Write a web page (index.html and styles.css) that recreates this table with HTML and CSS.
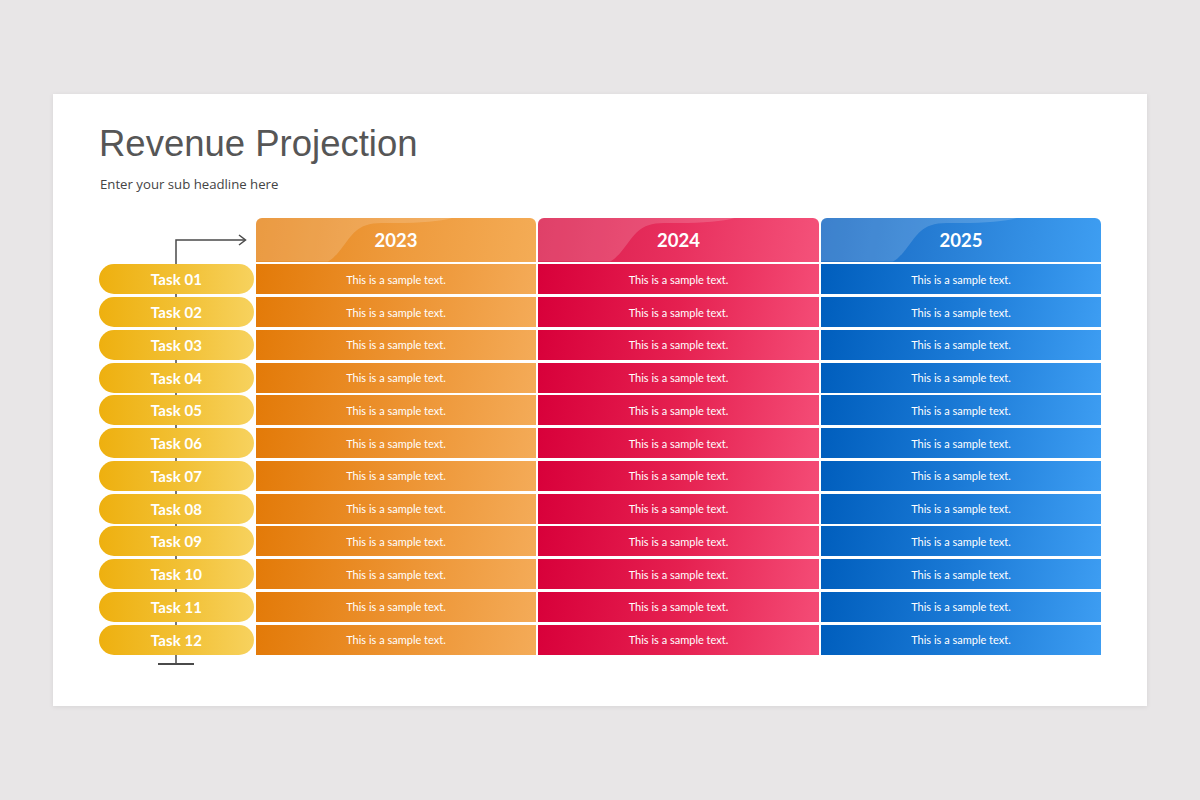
FILE: index.html
```html
<!DOCTYPE html>
<html lang="en">
<head>
<meta charset="utf-8">
<title>Revenue Projection</title>
<link rel="stylesheet" href="styles.css">
</head>
<body>
<div class="slide">
  <h1 class="title">Revenue Projection</h1>
  <p class="subtitle">Enter your sub headline here</p>
  <div class="table">
    <svg class="axis" width="160" height="450" viewBox="0 0 160 450">
      <path d="M77 446 V22 H146" fill="none" stroke="#4a4a4a" stroke-width="1.5"/>
      <path d="M140 17 L146.5 22 L140 27" fill="none" stroke="#4a4a4a" stroke-width="1.5"/>
      <path d="M59 446 H95" stroke="#4a4a4a" stroke-width="2"/>
    </svg>
    <div class="tasks">
      <div class="spacer"></div>
      <div class="task">Task 01</div>
      <div class="task">Task 02</div>
      <div class="task">Task 03</div>
      <div class="task">Task 04</div>
      <div class="task">Task 05</div>
      <div class="task">Task 06</div>
      <div class="task">Task 07</div>
      <div class="task">Task 08</div>
      <div class="task">Task 09</div>
      <div class="task">Task 10</div>
      <div class="task">Task 11</div>
      <div class="task">Task 12</div>
    </div>
    <div class="col orange">
      <div class="head"><svg class="gloss" viewBox="0 0 280 44" preserveAspectRatio="none"><path d="M0 0 H196 Q175 6 126 5 C100 5 96 18 86 30 C80 38 76 42 72 44 H0 Z"/></svg><span>2023</span></div>
      <div class="cell">This is a sample text.</div>
      <div class="cell">This is a sample text.</div>
      <div class="cell">This is a sample text.</div>
      <div class="cell">This is a sample text.</div>
      <div class="cell">This is a sample text.</div>
      <div class="cell">This is a sample text.</div>
      <div class="cell">This is a sample text.</div>
      <div class="cell">This is a sample text.</div>
      <div class="cell">This is a sample text.</div>
      <div class="cell">This is a sample text.</div>
      <div class="cell">This is a sample text.</div>
      <div class="cell">This is a sample text.</div>
    </div>
    <div class="col red">
      <div class="head"><svg class="gloss" viewBox="0 0 280 44" preserveAspectRatio="none"><path d="M0 0 H196 Q175 6 126 5 C100 5 96 18 86 30 C80 38 76 42 72 44 H0 Z"/></svg><span>2024</span></div>
      <div class="cell">This is a sample text.</div>
      <div class="cell">This is a sample text.</div>
      <div class="cell">This is a sample text.</div>
      <div class="cell">This is a sample text.</div>
      <div class="cell">This is a sample text.</div>
      <div class="cell">This is a sample text.</div>
      <div class="cell">This is a sample text.</div>
      <div class="cell">This is a sample text.</div>
      <div class="cell">This is a sample text.</div>
      <div class="cell">This is a sample text.</div>
      <div class="cell">This is a sample text.</div>
      <div class="cell">This is a sample text.</div>
    </div>
    <div class="col blue">
      <div class="head"><svg class="gloss" viewBox="0 0 280 44" preserveAspectRatio="none"><path d="M0 0 H196 Q175 6 126 5 C100 5 96 18 86 30 C80 38 76 42 72 44 H0 Z"/></svg><span>2025</span></div>
      <div class="cell">This is a sample text.</div>
      <div class="cell">This is a sample text.</div>
      <div class="cell">This is a sample text.</div>
      <div class="cell">This is a sample text.</div>
      <div class="cell">This is a sample text.</div>
      <div class="cell">This is a sample text.</div>
      <div class="cell">This is a sample text.</div>
      <div class="cell">This is a sample text.</div>
      <div class="cell">This is a sample text.</div>
      <div class="cell">This is a sample text.</div>
      <div class="cell">This is a sample text.</div>
      <div class="cell">This is a sample text.</div>
    </div>
  </div>
</div>
</body>
</html>
```
FILE: styles.css
```css
* { box-sizing: border-box; }
html, body { margin: 0; padding: 0; }
body {
  background: #e8e6e7;
  width: 1200px;
  height: 800px;
  overflow: hidden;
  padding-top: 94px;
  padding-left: 53px;
}
.slide {
  width: 1094px;
  height: 612px;
  background: #ffffff;
  box-shadow: 0 1px 5px rgba(0,0,0,0.08);
  padding: 30px 0 0 46px;
}
.title {
  margin: 0;
  font-family: "Liberation Sans", Arial, sans-serif;
  font-weight: 400;
  font-size: 36.5px;
  line-height: 40px;
  color: #565656;
}
.subtitle {
  margin: 10px 0 0 1px;
  font-family: "Open Sans", sans-serif;
  font-size: 13.2px;
  line-height: 20px;
  color: #444444;
}
.table {
  position: relative;
  margin-top: 24px;
  display: flex;
  gap: 2px;
}
.axis {
  position: absolute;
  left: 0;
  top: 0;
  z-index: 0;
}
.tasks, .col {
  display: flex;
  flex-direction: column;
  gap: 2.75px;
}
.tasks { width: 155px; position: relative; z-index: 1; }
.col { width: 280px; }
.col.red { width: 281px; }
.spacer { height: 43.5px; }
.task {
  height: 30px;
  border-radius: 15px;
  background: linear-gradient(90deg, #eeb00f 0%, #f2c136 55%, #f7d25e 100%);
  color: #ffffff;
  font-family: Lato, "Open Sans", sans-serif;
  font-weight: 700;
  font-size: 15px;
  display: flex;
  align-items: center;
  justify-content: center;
  letter-spacing: 0.1px;
}
.head {
  position: relative;
  height: 43.5px;
  border-radius: 6px 6px 0 0;
  display: flex;
  align-items: center;
  justify-content: center;
  overflow: hidden;
  color: #ffffff;
  font-family: Lato, "Open Sans", sans-serif;
  font-weight: 700;
  font-size: 18.5px;
}
.head span { position: relative; }
.gloss {
  position: absolute;
  left: 0;
  top: 0;
  width: 100%;
  height: 100%;
}
.gloss path { fill: rgba(255,255,255,0.17); }
.cell {
  height: 30px;
  display: flex;
  align-items: center;
  justify-content: center;
  color: #ffffff;
  font-family: Lato, "Open Sans", sans-serif;
  font-size: 11px;
}
.orange .head { background: linear-gradient(100deg, #e6861c 0%, #ee9a3c 50%, #f4ac56 100%); }
.orange .cell { background: linear-gradient(100deg, #e37a08 0%, #ec9230 50%, #f4ab58 100%); }
.red .head { background: linear-gradient(100deg, #d91a4a 0%, #e8305e 50%, #f4527a 100%); }
.red .cell { background: linear-gradient(100deg, #d8003a 0%, #e52050 50%, #f44c76 100%); }
.blue .head { background: linear-gradient(100deg, #1567c2 0%, #2a82d8 50%, #3e9ef2 100%); }
.blue .cell { background: linear-gradient(100deg, #005ebd 0%, #1b7ad6 50%, #3d9df2 100%); }
```
